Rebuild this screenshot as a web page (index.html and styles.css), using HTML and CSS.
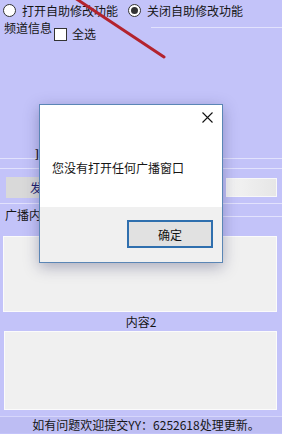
FILE: index.html
```html
<!DOCTYPE html>
<html>
	<head>
		<meta charset="UTF-8" />
		<title>广播助手</title>
		<link rel="stylesheet" href="styles.css">
	</head>
	<body>
<div class="app">
  <div class="row-top">
    <label class="opt"><span class="radio"></span>打开自助修改功能</label>
    <label class="opt opt-second"><span class="radio checked"></span>关闭自助修改功能</label>
  </div>
  <div class="row-channel">
    <span class="channel-title">频道信息</span>
    <label class="opt"><span class="check"></span>全选</label>
    <span class="rule"></span>
  </div>
  <div class="channel-body"><span class="cut-label">]</span></div>
  <div class="gap-line"></div>
  <div class="send-row">
    <button class="send-btn">发送</button>
    <span class="send-input"></span>
  </div>
  <div class="content-row">
    <span class="content-title">广播内容</span>
    <span class="rule"></span>
  </div>
  <div class="box box-first"></div>
  <div class="box-caption">内容2</div>
  <div class="box box-second"></div>
  <div class="footer">如有问题欢迎提交YY：6252618处理更新。</div>
</div>

<svg class="arrow" width="282" height="70" viewBox="0 0 282 70">
  <line x1="72" y1="-4" x2="164" y2="57" stroke="#b3232e" stroke-width="3" stroke-linecap="round" />
</svg>

<div class="dialog">
  <div class="dialog-body">
    <svg class="dialog-close" width="11" height="11" viewBox="0 0 11 11">
      <path d="M0.5 0.5 L10.5 10.5 M10.5 0.5 L0.5 10.5" stroke="#111" stroke-width="1.1" fill="none" />
    </svg>
    <p class="dialog-text">您没有打开任何广播窗口</p>
  </div>
  <div class="dialog-foot">
    <button class="ok-btn">确定</button>
  </div>
</div>
	</body>
</html>
```

FILE: styles.css
```css
* {
	margin: 0;
	padding: 0;
	box-sizing: border-box;
}

body {
	width: 282px;
	height: 434px;
	overflow: hidden;
	position: relative;
	background-color: #c3c3f9;
	font-family: "Noto Sans CJK SC", "Noto Sans", sans-serif;
	font-size: 12px;
	color: #151515;
}

.app {
	display: flex;
	flex-direction: column;
}

.opt {
	display: flex;
	align-items: center;
	gap: 6px;
	line-height: 16px;
}

.radio {
	width: 13px;
	height: 13px;
	border-radius: 50%;
	border: 1px solid #333;
	background: #fff;
	display: flex;
	align-items: center;
	justify-content: center;
}

.radio.checked::after {
	content: "";
	width: 7px;
	height: 7px;
	border-radius: 50%;
	background: #333;
}

.check {
	width: 13px;
	height: 13px;
	border: 1px solid #333;
	background: #fff;
}

.row-top {
	height: 20px;
	display: flex;
	align-items: center;
	padding: 1px 0 0 3px;
}

.row-top .opt-second {
	margin-left: 10px;
}

.row-channel {
	height: 18px;
	display: flex;
	align-items: flex-start;
	padding-left: 4px;
}

.channel-title {
	line-height: 14px;
	margin-top: 1px;
}

.row-channel .opt {
	margin: 6px 0 0 2px;
	gap: 5px;
}

.row-channel .rule {
	flex: 1;
	margin: 7px 0 0 55px;
	border-top: 1px solid #e2e2fd;
}

.channel-body {
	height: 121px;
	border-bottom: 1px solid #e2e2fd;
	display: flex;
	align-items: flex-end;
	padding: 0 0 0 35px;
}

.cut-label {
	font-size: 11px;
	line-height: 10px;
	margin-bottom: 0;
	font-weight: bold;
}

.gap-line {
	height: 10px;
	border-bottom: 1px solid #e2e2fd;
}

.send-row {
	height: 35px;
	display: flex;
	align-items: flex-start;
	justify-content: space-between;
	padding: 8px 5px 0 6px;
	border-bottom: 1px solid #e2e2fd;
}

.send-btn {
	width: 64px;
	height: 21px;
	border: none;
	background: #d9d9d9;
	color: #1d1d6e;
	font-family: inherit;
	font-size: 12px;
	padding-left: 8px;
}

.send-input {
	width: 51px;
	height: 19px;
	margin-top: 1px;
	background: linear-gradient(to right, #f4f4f4, #e6e6e6);
	border: 1px solid #f8f8f8;
}

.content-row {
	height: 32px;
	display: flex;
	align-items: flex-start;
	padding: 3px 0 0 5px;
}

.content-title {
	line-height: 15px;
}

.content-row .rule {
	flex: 1;
	margin-top: 9px;
	border-top: 1px solid #e2e2fd;
}

.box {
	background: #f0f0f0;
	border: 1px solid #fbfbfb;
}

.box-first {
	height: 76px;
	margin: 0 5px 0 3px;
}

.box-caption {
	height: 19px;
	text-align: center;
	line-height: 19px;
}

.box-second {
	height: 79px;
	margin: 0 5px 0 4px;
}

.footer {
	margin-top: 6px;
	border-top: 1px solid #d6d6fb;
	background: #bdbdf3;
	height: 17px;
	line-height: 16px;
	text-align: center;
	padding-left: 10px;
}

.arrow {
	position: absolute;
	left: 0;
	top: 0;
}

.dialog {
	position: absolute;
	left: 39px;
	top: 104px;
	width: 184px;
	height: 159px;
	border: 1px solid #5b86b5;
	background: #f0f0f0;
	box-shadow: 0 4px 14px rgba(40, 40, 90, 0.35);
	display: flex;
	flex-direction: column;
}

.dialog-body {
	height: 102px;
	background: #fff;
	position: relative;
	padding: 55px 0 0 12px;
}

.dialog-close {
	position: absolute;
	right: 9px;
	top: 7px;
}

.dialog-text {
	line-height: 16px;
}

.dialog-foot {
	flex: 1;
	display: flex;
	justify-content: flex-end;
	padding: 13px 9px 0 0;
}

.ok-btn {
	width: 86px;
	height: 28px;
	border: 2px solid #2f6fae;
	background: #e1e1e1;
	font-family: inherit;
	font-size: 12px;
	color: #111;
}
```
